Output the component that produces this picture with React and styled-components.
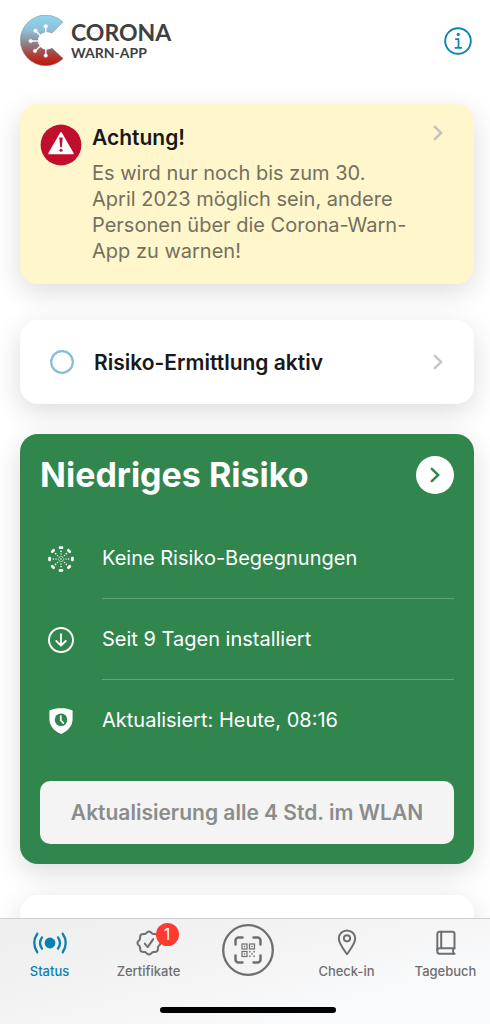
import React from "react";
import styled, { createGlobalStyle, css } from "styled-components";

const GlobalStyle = createGlobalStyle`
  * {
    box-sizing: border-box;
  }
  body {
    margin: 0;
    background: #fff;
    font-family: Inter, "Liberation Sans", sans-serif;
    color: #17191a;
  }
  h2, p, ul {
    margin: 0;
    padding: 0;
  }
  ul {
    list-style: none;
  }
  button {
    font: inherit;
    color: inherit;
    border: 0;
    padding: 0;
    background: none;
    cursor: pointer;
  }
`;

const Screen = styled.div`
  display: flex;
  flex-direction: column;
  height: 100vh;
`;

const Content = styled.main`
  flex: 1;
  min-height: 0;
  overflow-y: auto;
  padding: 0 16px 0 20px;
  scrollbar-width: none;
`;

const Header = styled.header`
  display: flex;
  align-items: center;
  justify-content: space-between;
  height: 82px;
  margin-bottom: 22px;
`;

const Brand = styled.div`
  display: flex;
  align-items: center;
  gap: 5px;
`;

const BrandText = styled.div`
  display: flex;
  flex-direction: column;
  font-family: Lato, sans-serif;
  font-weight: 700;
  color: #404042;
`;

const BrandName = styled.span`
  font-size: 23px;
  line-height: 24px;
`;

const BrandSub = styled.span`
  font-size: 14px;
  line-height: 18px;
`;

const InfoButton = styled.button`
  display: flex;
  margin-right: 2px;
`;

const card = css`
  border-radius: 18px;
  background: #fff;
  box-shadow: 0 8px 28px rgba(0, 0, 0, 0.14);
`;

const WarningCard = styled.section`
  ${card}
  display: flex;
  align-items: flex-start;
  gap: 10px;
  padding: 20px 30px 20px 20px;
  margin-bottom: 36px;
  background: #fff6cb;
`;

const WarningBody = styled.div`
  flex: 1;
  padding-right: 12px;
`;

const CardTitle = styled.h2`
  font-size: 21px;
  line-height: 28px;
  font-weight: 600;
`;

const WarningText = styled.p`
  margin-top: 8px;
  font-size: 20px;
  line-height: 26px;
  color: #73705f;
`;

const StatusCard = styled.button`
  ${card}
  display: flex;
  align-items: center;
  gap: 18px;
  width: 100%;
  height: 84px;
  padding: 0 30px 0 28px;
  margin-bottom: 30px;
  text-align: left;
`;

const StatusLabel = styled.span`
  flex: 1;
  font-size: 21px;
  font-weight: 600;
`;

const RiskCard = styled.section`
  ${card}
  padding: 22px 20px 20px;
  margin-bottom: 31px;
  background: #30864d;
  color: #fff;
`;

const RiskHeader = styled.div`
  display: flex;
  align-items: center;
  justify-content: space-between;
  margin-bottom: 24px;
`;

const RiskTitle = styled.h2`
  font-size: 34px;
  line-height: 38px;
  font-weight: 700;
`;

const RoundButton = styled.button`
  display: flex;
  align-items: center;
  justify-content: center;
  width: 38px;
  height: 38px;
  border-radius: 50%;
  background: #fff;
  color: #30864d;
`;

const RiskRow = styled.li`
  display: grid;
  grid-template-columns: 62px 1fr;
  align-items: center;
  height: 81px;

  & > svg {
    margin-left: 7px;
  }
`;

const RiskText = styled.span`
  display: flex;
  align-items: center;
  height: 100%;
  font-size: 20px;
  border-bottom: 1px solid
    ${(props) => (props.$last ? "transparent" : "rgba(255, 255, 255, 0.25)")};
`;

const UpdateButton = styled.button`
  width: 100%;
  height: 63px;
  margin-top: 20px;
  border-radius: 10px;
  background: #f4f4f4;

  &:disabled {
    color: #8b8c8c;
    font-size: 21px;
    font-weight: 600;
    cursor: default;
  }
`;

const EmptyCard = styled.section`
  ${card}
  height: 84px;
`;

const TabBar = styled.nav`
  height: 106px;
  border-top: 1px solid #cfcfcf;
  background: linear-gradient(165deg, #efefef 10%, #f4f4f5 45%, #f9fafb 75%);
  overflow: hidden;
`;

const TabBarInner = styled.div`
  margin-right: -5px;
`;

const TabList = styled.ul`
  display: grid;
  grid-template-columns: repeat(5, 1fr);
`;

const Tab = styled.button`
  display: flex;
  flex-direction: column;
  align-items: center;
  width: 100%;
  height: 88px;
  padding-top: ${(props) => (props.$round ? "5px" : "8px")};
  gap: 3px;
  font-size: 13px;
  line-height: 18px;
  font-weight: 500;
  color: ${(props) => (props.$active ? "#0a80b0" : "#6f6f70")};
`;

const TabIcon = styled.span`
  position: relative;
  display: flex;
`;

const Badge = styled.span`
  position: absolute;
  top: -4px;
  left: 23px;
  width: 23px;
  height: 23px;
  border-radius: 50%;
  background: #ff3b30;
  color: #fff;
  font-size: 16px;
  line-height: 23px;
  font-weight: 400;
  text-align: center;
`;

const HomeIndicator = styled.div`
  width: 176px;
  height: 6px;
  margin: 0 auto;
  border-radius: 3px;
  background: #000;
`;

function Logo() {
  const arms = [
    [25.7, 11.3],
    [15.5, 15.7],
    [10.7, 26],
    [15, 36],
    [25.7, 40.6],
  ];
  return (
    <svg width="46" height="52" viewBox="0 0 46 52" aria-hidden="true">
      <defs>
        <linearGradient id="logo" x1="0" y1="0" x2="0" y2="1">
          <stop offset="0" stopColor="#8fd6f3" />
          <stop offset="0.3" stopColor="#8fc0d8" />
          <stop offset="0.55" stopColor="#8d858d" />
          <stop offset="0.8" stopColor="#b03a34" />
          <stop offset="1" stopColor="#c01405" />
        </linearGradient>
      </defs>
      <path
        d="M43 7A25.3 25.3 0 1 0 43.2 43.6L31.8 33A8.6 8.6 0 1 1 31.8 18.2Z"
        fill="url(#logo)"
        stroke="#7b8b93"
        strokeWidth="0.5"
      />
      <circle cx="26.5" cy="25.8" r="8.6" fill="#fff" />
      {arms.map(([x, y]) => (
        <g key={`${x}-${y}`} stroke="#fff" fill="#fff">
          <line x1={x} y1={y} x2="26" y2="26" strokeWidth="1.4" />
          <circle cx={x} cy={y} r="1.8" strokeWidth="0.4" />
        </g>
      ))}
    </svg>
  );
}

function InfoIcon() {
  return (
    <svg width="28" height="28" viewBox="0 0 28 28" fill="none" stroke="#0b84b4">
      <circle cx="14" cy="14" r="12.8" strokeWidth="1.9" />
      <circle cx="14.2" cy="7.4" r="1.6" fill="#0b84b4" stroke="none" />
      <path d="M11.2 12.1h3.3v8.7M10.7 20.9h7.2" strokeWidth="1.7" />
    </svg>
  );
}

function Chevron({ color = "currentColor" }) {
  return (
    <svg width="12" height="18" viewBox="0 0 12 18" fill="none">
      <path
        d="M2.8 2.8 9.2 9l-6.4 6.2"
        stroke={color}
        strokeWidth="2.5"
        strokeLinecap="round"
        strokeLinejoin="miter"
      />
    </svg>
  );
}

function WarningIcon() {
  return (
    <svg width="42" height="42" viewBox="0 0 42 42">
      <circle cx="21" cy="21" r="20.4" fill="#c00f2d" />
      <path
        d="M21 9 32.8 29.4H9.2Z"
        fill="#fff"
        stroke="#fff"
        strokeWidth="1.8"
        strokeLinejoin="round"
      />
      <path d="M19.3 13.6h3.4l-.9 9.6h-1.6Z" fill="#c00f2d" />
      <circle cx="21" cy="26.3" r="1.5" fill="#c00f2d" />
    </svg>
  );
}

function EncounterIcon() {
  const angles = [0, 45, 90, 135, 180, 225, 270, 315];
  return (
    <svg width="28" height="28" viewBox="0 0 28 28" fill="#fff">
      {angles.map((a) => (
        <g key={a} transform={`rotate(${a} 14 14)`}>
          <rect x="11.7" y="1.2" width="4.6" height="2.8" rx="1.2" />
          <circle cx="14" cy="6.4" r="0.8" />
          <circle cx="14" cy="9" r="0.7" />
          <circle cx="14" cy="11.4" r="0.6" />
        </g>
      ))}
      <circle cx="14" cy="14" r="0.8" />
    </svg>
  );
}

function InstalledIcon() {
  return (
    <svg
      width="28"
      height="28"
      viewBox="0 0 28 28"
      fill="none"
      stroke="#fff"
      strokeWidth="1.9"
      strokeLinecap="round"
      strokeLinejoin="round"
    >
      <circle cx="14" cy="14" r="12" />
      <path d="M14 8.3v11.2M9.3 15l4.7 4.7 4.7-4.7" />
    </svg>
  );
}

function ShieldIcon() {
  return (
    <svg width="28" height="28" viewBox="0 0 28 28">
      <path
        d="M2.4 3.6C6 1.8 10 1.3 14 1.3s8 .5 11.6 2.3v8.2c0 7-4.4 12.2-11.6 15.2C6.8 24 2.4 18.8 2.4 11.8Z"
        fill="#fff"
      />
      <circle cx="14" cy="12.8" r="6.3" fill="#30864d" />
      <path
        d="M13.8 9v4.2l2.6 2.9"
        fill="none"
        stroke="#fff"
        strokeWidth="1.7"
        strokeLinecap="round"
      />
    </svg>
  );
}

const tabIconProps = {
  height: 32,
  fill: "none",
  stroke: "currentColor",
  strokeLinecap: "round",
  strokeLinejoin: "round",
};

function StatusIcon() {
  return (
    <svg width="36" viewBox="0 0 36 32" {...tabIconProps} strokeWidth="2.3">
      <circle cx="18" cy="16" r="5.4" fill="currentColor" stroke="none" />
      <path d="M10 10.4c-2.5 3.5-2.5 7.7 0 11.2M26 10.4c2.5 3.5 2.5 7.7 0 11.2" />
      <path d="M5.3 6.8c-4 5.5-4 12.9 0 18.4M30.7 6.8c4 5.5 4 12.9 0 18.4" />
    </svg>
  );
}

// seal outline with eight soft lobes
const sealPoints = Array.from({ length: 96 }, (_, i) => {
  const t = (i / 96) * Math.PI * 2;
  const r = 10.7 + 0.8 * Math.cos(8 * t);
  return `${(16 + r * Math.cos(t)).toFixed(2)},${(16 + r * Math.sin(t)).toFixed(2)}`;
}).join(" ");

function SealIcon() {
  return (
    <svg width="32" viewBox="0 0 32 32" {...tabIconProps} strokeWidth="2">
      <polygon points={sealPoints} />
      <path d="m11.8 16.6 2.9 3.5 5.5-8" />
    </svg>
  );
}

function ScanIcon() {
  return (
    <svg
      width="52"
      height="52"
      viewBox="0 0 52 52"
      fill="none"
      stroke="currentColor"
      strokeLinecap="round"
    >
      <circle cx="26" cy="26" r="24.8" strokeWidth="2.3" />
      <path
        d="M13.5 20.5v-4a3 3 0 0 1 3-3h4M31.5 13.5h4a3 3 0 0 1 3 3v4M38.5 31.5v4a3 3 0 0 1-3 3h-4M20.5 38.5h-4a3 3 0 0 1-3-3v-4"
        strokeWidth="2.5"
      />
      <g strokeWidth="1.2" strokeLinecap="butt">
        <rect x="20" y="20" width="5" height="5" />
        <rect x="27.5" y="20" width="5" height="5" />
        <rect x="20" y="27.5" width="5" height="5" />
      </g>
      <g fill="currentColor" stroke="none">
        <rect x="21.8" y="21.8" width="1.4" height="1.4" />
        <rect x="29.3" y="21.8" width="1.4" height="1.4" />
        <rect x="21.8" y="29.3" width="1.4" height="1.4" />
        <rect x="27" y="27" width="1.5" height="1.5" />
        <rect x="31.3" y="27" width="1.5" height="1.5" />
        <rect x="29.2" y="29.2" width="1.5" height="1.5" />
        <rect x="27" y="31.4" width="1.5" height="1.5" />
        <rect x="31.3" y="31.4" width="1.5" height="1.5" />
      </g>
    </svg>
  );
}

function PinIcon() {
  return (
    <svg width="32" viewBox="0 0 32 32" {...tabIconProps} strokeWidth="2">
      <path d="M16 27.2C12 21.5 7.8 16.5 7.8 11.6a8.2 8.2 0 0 1 16.4 0C24.2 16.5 20 21.5 16 27.2Z" />
      <circle cx="16" cy="11.3" r="3.1" />
    </svg>
  );
}

function BookIcon() {
  return (
    <svg width="32" viewBox="0 0 32 32" {...tabIconProps} strokeWidth="2">
      <path d="M24.5 21.2V6.7A1.9 1.9 0 0 0 22.6 4.8H9.2A1.9 1.9 0 0 0 7.3 6.7v17.8a2.3 2.3 0 0 0 2.3 2.3h14.9" />
      <path d="M24.5 21.2H9.6a2.3 2.3 0 0 0-2.3 2.3M11.2 4.8v16.4M23.6 21.2c-.8 1.8-.8 3.8 0 5.6" />
    </svg>
  );
}

const riskRows = [
  { icon: <EncounterIcon />, text: "Keine Risiko-Begegnungen" },
  { icon: <InstalledIcon />, text: "Seit 9 Tagen installiert" },
  { icon: <ShieldIcon />, text: "Aktualisiert: Heute, 08:16" },
];

const tabs = [
  { label: "Status", icon: <StatusIcon />, active: true },
  { label: "Zertifikate", icon: <SealIcon />, badge: 1 },
  { icon: <ScanIcon />, name: "QR-Code scannen" },
  { label: "Check-in", icon: <PinIcon /> },
  { label: "Tagebuch", icon: <BookIcon /> },
];

export default function App() {
  return (
    <Screen>
      <GlobalStyle />
      <Content>
        <Header>
          <Brand>
            <Logo />
            <BrandText>
              <BrandName>CORONA</BrandName>
              <BrandSub>WARN-APP</BrandSub>
            </BrandText>
          </Brand>
          <InfoButton aria-label="Informationen">
            <InfoIcon />
          </InfoButton>
        </Header>

        <WarningCard>
          <WarningIcon />
          <WarningBody>
            <CardTitle>Achtung!</CardTitle>
            <WarningText>
              Es wird nur noch bis zum 30. April 2023 möglich sein, andere
              Personen über die Corona-Warn-App zu warnen!
            </WarningText>
          </WarningBody>
          <Chevron color="#c3c1c1" />
        </WarningCard>

        <StatusCard>
          <svg width="28" height="28" viewBox="0 0 28 28" fill="none">
            <circle cx="14" cy="14" r="10.8" stroke="#84bfd7" strokeWidth="2.2" />
          </svg>
          <StatusLabel>Risiko-Ermittlung aktiv</StatusLabel>
          <Chevron color="#c6c6c6" />
        </StatusCard>

        <RiskCard>
          <RiskHeader>
            <RiskTitle>Niedriges Risiko</RiskTitle>
            <RoundButton aria-label="Details">
              <Chevron />
            </RoundButton>
          </RiskHeader>
          <ul>
            {riskRows.map(({ icon, text }, i) => (
              <RiskRow key={text}>
                {icon}
                <RiskText $last={i === riskRows.length - 1}>{text}</RiskText>
              </RiskRow>
            ))}
          </ul>
          <UpdateButton disabled>Aktualisierung alle 4 Std. im WLAN</UpdateButton>
        </RiskCard>

        <EmptyCard />
      </Content>

      <TabBar>
        <TabBarInner>
          <TabList>
            {tabs.map(({ label, icon, active, badge, name }) => (
              <li key={label || name}>
                <Tab $active={active} $round={!label} aria-label={name}>
                  <TabIcon>
                    {icon}
                    {badge ? <Badge>{badge}</Badge> : null}
                  </TabIcon>
                  {label}
                </Tab>
              </li>
            ))}
          </TabList>
          <HomeIndicator />
        </TabBarInner>
      </TabBar>
    </Screen>
  );
}
